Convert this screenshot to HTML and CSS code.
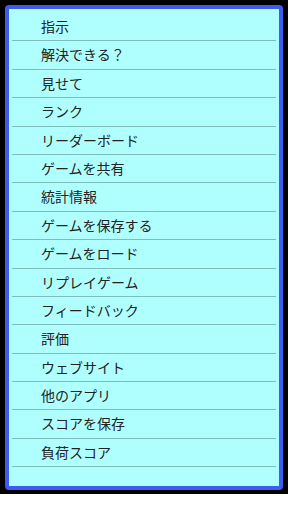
FILE: index.html
```html
<!DOCTYPE html>
<html lang="ja">
<head>
  <meta charset="UTF-8" />
  <meta name="viewport" content="width=device-width, initial-scale=1.0"/>
  <title>メニュー</title>
  <link rel="stylesheet" href="styles.css">
</head>
<body>

<div class="screen">
  <div class="menu-panel">
    <ul class="menu-list">
      <li>指示</li>
      <li>解決できる？</li>
      <li>見せて</li>
      <li>ランク</li>
      <li>リーダーボード</li>
      <li>ゲームを共有</li>
      <li>統計情報</li>
      <li>ゲームを保存する</li>
      <li>ゲームをロード</li>
      <li>リプレイゲーム</li>
      <li>フィードバック</li>
      <li>評価</li>
      <li>ウェブサイト</li>
      <li>他のアプリ</li>
      <li>スコアを保存</li>
      <li>負荷スコア</li>
      <li class="empty"></li>
    </ul>
  </div>
</div>

</body>
</html>
```

FILE: styles.css
```css
body {
  margin: 0;
  background-color: #fff;
  font-family: "Noto Sans CJK JP", "DejaVu Sans", sans-serif;
}

.screen {
  height: 494px;
  background-color: #000;
  padding: 5px 5px 4px 5px;
  box-sizing: border-box;
}

.menu-panel {
  height: 100%;
  border: 4px solid #3c5cf0;
  border-radius: 4px;
  background-color: #b0ffff;
  box-sizing: border-box;
  overflow: hidden;
}

.menu-list {
  list-style: none;
  margin: 0;
  padding: 4px 3px 0 3px;
}

.menu-list li {
  height: 27.4px;
  border-bottom: 1px solid #7fbcbc;
  padding-left: 29px;
  font-size: 14px;
  line-height: 27px;
  color: #222;
}
```
